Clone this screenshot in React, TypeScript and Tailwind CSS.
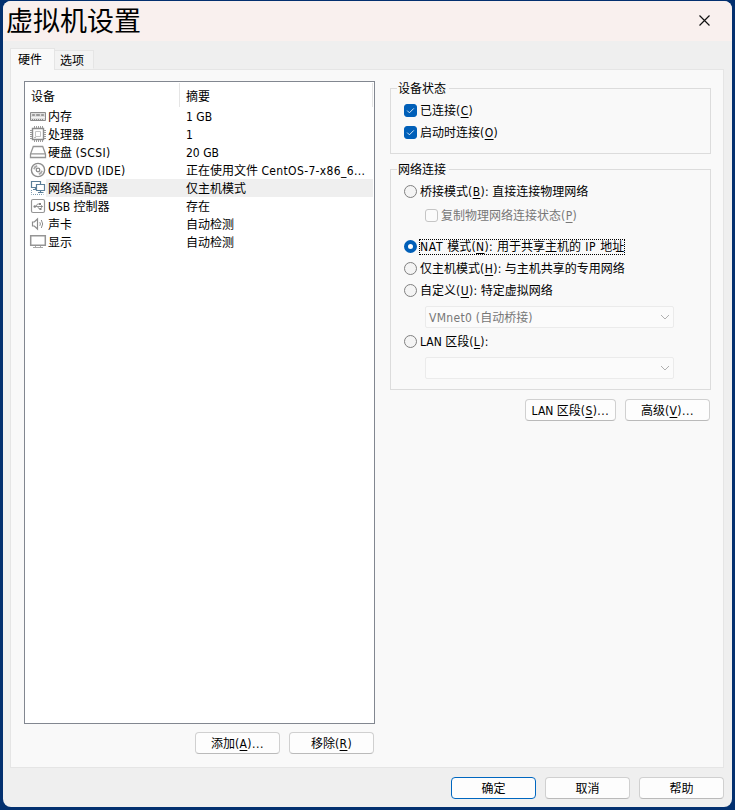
import { ReactNode, useState } from "react";
import clsx from "clsx";

interface Device {
    name: ReactNode;
    summary: ReactNode;
    icon: ReactNode;
}

const MemoryIcon = () => (
    <svg width="18" height="18" viewBox="0 0 18 18" fill="none" stroke="#8c8c8c">
        <path d="M1.5 5.5h15v8h-15z" fill="#dedede" />
        <path d="M3.5 7.5h2v1h-2zM7.5 7.5h3v1h-3zM12.5 7.5h2v1h-2z" fill="#999" stroke="#999" />
        <path d="M2 10.5h14" stroke="#f4f4f4" />
        <path d="M3 12.5h12" strokeDasharray="1 1" />
    </svg>
);

const CpuIcon = () => (
    <svg width="18" height="18" viewBox="0 0 18 18" fill="none" stroke="#8c8c8c">
        <path d="M3.5 3.5h11v11h-11z" strokeWidth="1.4" />
        <path d="M6.5 6.5h5v5h-5z" stroke="#c4c4c4" />
        <path d="M5.5 12.5h1" stroke="#777" />
        <path d="M5.5 1v2M7.5 1v2M9.5 1v2M11.5 1v2M13.5 1v2M5.5 15v2M7.5 15v2M9.5 15v2M11.5 15v2M13.5 15v2M1 5.5h2M1 7.5h2M1 9.5h2M1 11.5h2M1 13.5h2M15 5.5h2M15 7.5h2M15 9.5h2M15 11.5h2M15 13.5h2" stroke="#9c9c9c" />
    </svg>
);

const DiskIcon = () => (
    <svg width="18" height="18" viewBox="0 0 18 18" fill="none" stroke="#959595" strokeWidth="1.3">
        <path d="M4.3 3.5h9.4l2.8 7.5v3.5h-15V11z" />
        <path d="M1.5 10.8h15" />
    </svg>
);

const DiscIcon = () => (
    <svg width="18" height="18" viewBox="0 0 18 18" fill="none" stroke="#8c8c8c">
        <circle cx="9" cy="9" r="6.6" strokeWidth="1.4" />
        <circle cx="9" cy="9" r="1.8" strokeWidth="1.3" />
        <path d="M5 8.2a4.2 4.2 0 0 1 3.2-3.2M13 9.8a4.2 4.2 0 0 1-3.2 3.2" strokeWidth="1.8" stroke="#a8a8a8" />
    </svg>
);

const NetworkIcon = () => (
    <svg width="18" height="18" viewBox="0 0 18 18" fill="none" stroke="#5b7f99" strokeWidth="1.2">
        <path d="M2.5 2.5h9v6h-9z" />
        <path d="M6.5 8.5v2M4 10.5h4" />
        <path d="M7.5 5.5h8v6h-8z" fill="#fff" />
        <path d="M11.5 11.5v2M9 13.5h5.5" />
        <path d="M2.5 11v4.5h12" strokeDasharray="1 1" stroke="#7f9db1" strokeWidth="1" />
    </svg>
);

const UsbIcon = () => (
    <svg width="18" height="18" viewBox="0 0 18 18" fill="none" stroke="#959595">
        <rect x="2.5" y="2.5" width="13" height="13" rx="1.5" strokeWidth="1.2" />
        <path d="M5 9.5h8M7 9.5l1.5-2.5h2M8.5 9.5l1.5 2.3h1.5" />
        <circle cx="5.8" cy="9.5" r="1.3" fill="#858585" stroke="none" />
        <path d="M10 6h2v2h-2zM10.5 10.9h2v2h-2zM12 8.1l2.2 1.4-2.2 1.4z" fill="#858585" stroke="none" />
    </svg>
);

const SoundIcon = () => (
    <svg width="18" height="18" viewBox="0 0 18 18" fill="none" stroke="#8c8c8c" strokeWidth="1.2">
        <path d="M3.5 7h1.8l3.2-3v10l-3.2-3H3.5z" />
        <path d="M10.8 7.2q1.2 1.8 0 3.6M12.3 5q2.8 4 0 8" strokeWidth="1" />
    </svg>
);

const DisplayIcon = () => (
    <svg width="18" height="18" viewBox="0 0 18 18" fill="none" stroke="#959595">
        <path d="M1.7 2.7h14.6v9.6H1.7z" strokeWidth="1.5" />
        <path d="M6.5 13v1M11.5 13v1M4 14.5h10" stroke="#a8a8a8" />
    </svg>
);

const Key = ({ children }: { children: string }) => (
    <span className="tracking-[0.4px]">(<span className="underline decoration-1 underline-offset-2">{children}</span>)</span>
);

const Dots = () => <span className="tracking-[0.6px]">...</span>;

const devices: Device[] = [
    { name: "内存", summary: "1 GB", icon: <MemoryIcon /> },
    { name: "处理器", summary: "1", icon: <CpuIcon /> },
    { name: <>硬盘 <span className="tracking-[0.4px]">(SCSI)</span></>, summary: "20 GB", icon: <DiskIcon /> },
    { name: <span className="tracking-[0.35px]">CD/DVD (IDE)</span>, summary: <>正在使用文件 <span className="tracking-[0.35px]">CentOS-7-x86_6...</span></>, icon: <DiscIcon /> },
    { name: "网络适配器", summary: "仅主机模式", icon: <NetworkIcon /> },
    { name: "USB 控制器", summary: "存在", icon: <UsbIcon /> },
    { name: "声卡", summary: "自动检测", icon: <SoundIcon /> },
    { name: "显示", summary: "自动检测", icon: <DisplayIcon /> },
];

const Button = ({ children, primary, wide }: { children: ReactNode; primary?: boolean; wide?: boolean }) => (
    <button
        className={clsx(
            "h-[22px] rounded-[4px] border bg-[#fdfdfd] pt-px leading-[21px] text-center whitespace-nowrap",
            wide ? "w-[91px]" : "w-[85px]",
            primary ? "border-[#0067c0]" : "border-[#d0d0d0] border-b-[#bababa]",
        )}
    >
        {children}
    </button>
);

const Group = ({ title, className, children }: { title: string; className: string; children: ReactNode }) => (
    <section className={clsx("relative w-[321px] border border-[#dcdcdc] pl-[13px]", className)}>
        <h2 className="absolute left-[6px] -top-[9px] h-[18px] bg-[#f9f9f9] pl-px pr-[3px] leading-[19px]">{title}</h2>
        {children}
    </section>
);

const Check = ({ label, defaultChecked, disabled }: { label: ReactNode; defaultChecked?: boolean; disabled?: boolean }) => {
    const [checked, setChecked] = useState<boolean>(!!defaultChecked);

    return (
        <button
            disabled={disabled}
            onClick={() => setChecked(!checked)}
            className={clsx("flex h-[18px] items-center gap-[3px] whitespace-nowrap", disabled && "text-[#777]")}
        >
            <span
                className={clsx(
                    "mb-[2px] flex size-[13px] items-center justify-center rounded-[3px] border",
                    checked ? "border-[#005fb8] bg-[#005fb8]" : "border-[#c5c5c5] bg-[#fbfbfb]",
                )}
            >
                {checked && (
                    <svg width="9" height="9" viewBox="0 0 9 9" fill="none" stroke="#d8e8f6">
                        <path d="M1.2 4.6l2.2 2.2 4.4-4.4" />
                    </svg>
                )}
            </span>
            <span>{label}</span>
        </button>
    );
};

const Radio = ({ checked, onClick, children }: { checked: boolean; onClick: () => void; children: ReactNode }) => (
    <button onClick={onClick} className="flex h-[18px] items-center gap-[2px] whitespace-nowrap">
        <span
            className={clsx(
                "mb-[2px] size-[13px] rounded-full",
                checked ? "border-4 border-[#005fb8] bg-white" : "border border-[#808080] bg-[#f4f4f4]",
            )}
        ></span>
        <span className={clsx("h-4 border border-dotted leading-[15px]", checked ? "border-black" : "border-transparent")}>
            {children}
        </span>
    </button>
);

const Select = ({ value, className }: { value?: ReactNode; className?: string }) => (
    <div className={clsx("ml-[21px] flex h-[22px] w-[249px] items-center justify-between rounded-[2px] border border-[#ebebeb] bg-[#fbfbfb] px-[3px] text-[#777]", className)}>
        <span className="pt-px">{value}</span>
        <svg width="10" height="6" viewBox="0 0 10 6" fill="none" stroke="#b0b0b0">
            <path d="M1 1l4 4 4-4" />
        </svg>
    </div>
);

const App = () => {
    const [selected, setSelected] = useState<number>(4);
    const [mode, setMode] = useState<string>("nat");

    return (
        <div className="h-[810px] w-[735px] bg-[#03306f] pl-[3px] pt-px font-['DejaVu_Sans_Condensed','Noto_Sans_CJK_SC',sans-serif] text-[12px] leading-[18px] text-black">
            <div className="flex h-[806px] w-[729px] flex-col overflow-hidden rounded-[8px] bg-[#efefef]">
                <header className="flex h-10 items-center justify-between bg-[#f9f0ee] pl-[3px] pr-[22px]">
                    <h1 className="pt-px text-[27px] leading-10">虚拟机设置</h1>
                    <svg className="mb-[2px]" width="11" height="11" viewBox="0 0 11 11" fill="none" stroke="#111" strokeWidth="1.2">
                        <path d="M.5.5l10 10M10.5.5l-10 10" />
                    </svg>
                </header>

                <nav className="mt-[7px] flex h-[21px] items-end pl-[7px]">
                    <div className="relative z-10 -mb-px h-[22px] w-[45px] border border-b-0 border-[#e5e5e5] bg-[#f9f9f9] pl-[7px] leading-[22px]">硬件</div>
                    <div className="h-[19px] w-[39px] border-y border-r border-[#e5e5e5] border-b-transparent bg-[#f3f3f3] pl-[5px] leading-[21px]">选项</div>
                </nav>

                <main className="ml-[7px] flex h-[699px] w-[714px] border border-[#e5e5e5] bg-[#f9f9f9] pl-[13px] pt-[11px]">
                    <div className="w-[351px]">
                        <div className="h-[643px] border border-[#828790] bg-white">
                            <div className="flex h-[25px] pt-px leading-[28px]">
                                <div className="w-[155px] border-r border-[#e5e5e5] pl-[6px]">设备</div>
                                <div className="w-[193px] border-r border-[#e5e5e5] pl-[6px]">摘要</div>
                            </div>
                            {devices.map((device, index) => (
                                <div key={index} onClick={() => setSelected(index)} className="flex h-[18px] pl-1 whitespace-nowrap">
                                    <span className="w-[17px] shrink-0">{device.icon}</span>
                                    <div className={clsx("flex w-[327px] leading-[21px]", selected === index && "bg-[#efefef]")}>
                                        <span className="w-[140px] pl-[2px]">{device.name}</span>
                                        <span>{device.summary}</span>
                                    </div>
                                </div>
                            ))}
                        </div>
                        <div className="mt-2 flex justify-end gap-[9px] pr-px">
                            <Button>添加<Key>A</Key><Dots /></Button>
                            <Button>移除<Key>R</Key></Button>
                        </div>
                    </div>

                    <div className="ml-[15px] mt-[7px]">
                        <Group title="设备状态" className="h-[66px] pt-[13px]">
                            <Check label={<>已连接<Key>C</Key></>} defaultChecked />
                            <div className="mt-1">
                                <Check label={<>启动时连接<Key>O</Key></>} defaultChecked />
                            </div>
                        </Group>
                        <Group title="网络连接" className="mt-[15px] h-[221px] pt-[13px]">
                            <Radio checked={mode === "bridged"} onClick={() => setMode("bridged")}>桥接模式<Key>B</Key>: 直接连接物理网络</Radio>
                            <div className="ml-[21px] mt-[6px]">
                                <Check label={<>复制物理网络连接状态<Key>P</Key></>} disabled />
                            </div>
                            <div className="mt-[13px] flex flex-col gap-1">
                                <Radio checked={mode === "nat"} onClick={() => setMode("nat")}>
                                    <span className="tracking-[0.7px]">NAT </span>模式<span className="tracking-[0.4px]"><Key>N</Key>: </span>用于共享主机的<span className="tracking-[0.7px]"> IP </span>地址
                                </Radio>
                                <Radio checked={mode === "host"} onClick={() => setMode("host")}>仅主机模式<Key>H</Key>: 与主机共享的专用网络</Radio>
                                <Radio checked={mode === "custom"} onClick={() => setMode("custom")}>自定义<Key>U</Key>: 特定虚拟网络</Radio>
                            </div>
                            <Select value={<><span className="tracking-[0.3px]">VMnet0 (</span>自动桥接)</>} className="mt-[6px]" />
                            <div className="mt-[5px]">
                                <Radio checked={mode === "lan"} onClick={() => setMode("lan")}>LAN 区段<Key>L</Key>:</Radio>
                            </div>
                            <Select className="mt-[6px]" />
                        </Group>
                        <div className="mt-[9px] flex justify-end gap-[9px] pr-px">
                            <Button wide>LAN 区段<Key>S</Key><Dots /></Button>
                            <Button>高级<Key>V</Key><Dots /></Button>
                        </div>
                    </div>
                </main>

                <footer className="mt-[9px] flex justify-end gap-[9px] pr-2">
                    <Button primary>确定</Button>
                    <Button>取消</Button>
                    <Button>帮助</Button>
                </footer>
            </div>
        </div>
    );
};

export default App;
